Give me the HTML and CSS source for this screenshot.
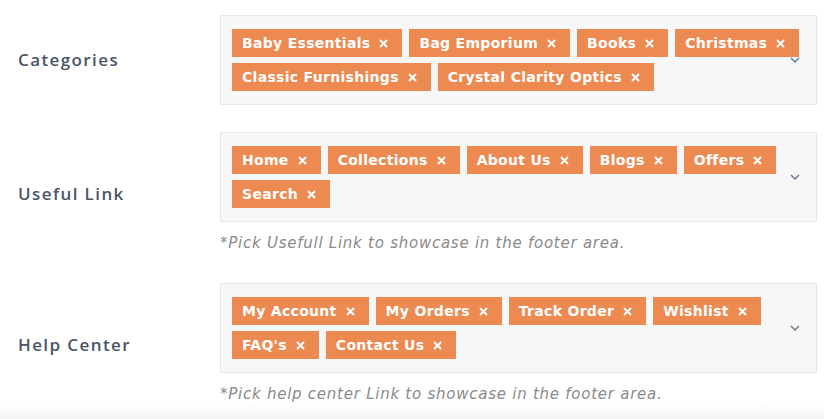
FILE: index.html
```html
<!DOCTYPE html>
<html>
<head>
<meta charset="utf-8">
<link rel="stylesheet" href="styles.css">
</head>
<body>
<div class="settings">
  <div class="field-row">
    <div class="label">Categories</div>
    <div class="field">
      <div class="select">
        <div class="tags">
          <span class="tag">Baby Essentials<svg class="x" viewBox="0 0 9 9"><path d="M1 1L8 8M8 1L1 8"/></svg></span>
          <span class="tag">Bag Emporium<svg class="x" viewBox="0 0 9 9"><path d="M1 1L8 8M8 1L1 8"/></svg></span>
          <span class="tag">Books<svg class="x" viewBox="0 0 9 9"><path d="M1 1L8 8M8 1L1 8"/></svg></span>
          <span class="tag">Christmas<svg class="x" viewBox="0 0 9 9"><path d="M1 1L8 8M8 1L1 8"/></svg></span>
          <span class="tag">Classic Furnishings<svg class="x" viewBox="0 0 9 9"><path d="M1 1L8 8M8 1L1 8"/></svg></span>
          <span class="tag">Crystal Clarity Optics<svg class="x" viewBox="0 0 9 9"><path d="M1 1L8 8M8 1L1 8"/></svg></span>
        </div>
        <svg class="chevron" viewBox="0 0 10 6"><path d="M1 1L5 5L9 1"/></svg>
      </div>
    </div>
  </div>
  <div class="field-row">
    <div class="label">Useful Link</div>
    <div class="field">
      <div class="select">
        <div class="tags">
          <span class="tag">Home<svg class="x" viewBox="0 0 9 9"><path d="M1 1L8 8M8 1L1 8"/></svg></span>
          <span class="tag">Collections<svg class="x" viewBox="0 0 9 9"><path d="M1 1L8 8M8 1L1 8"/></svg></span>
          <span class="tag">About Us<svg class="x" viewBox="0 0 9 9"><path d="M1 1L8 8M8 1L1 8"/></svg></span>
          <span class="tag">Blogs<svg class="x" viewBox="0 0 9 9"><path d="M1 1L8 8M8 1L1 8"/></svg></span>
          <span class="tag">Offers<svg class="x" viewBox="0 0 9 9"><path d="M1 1L8 8M8 1L1 8"/></svg></span>
          <span class="tag">Search<svg class="x" viewBox="0 0 9 9"><path d="M1 1L8 8M8 1L1 8"/></svg></span>
        </div>
        <svg class="chevron" viewBox="0 0 10 6"><path d="M1 1L5 5L9 1"/></svg>
      </div>
      <p class="help">*Pick Usefull Link to showcase in the footer area.</p>
    </div>
  </div>
  <div class="field-row">
    <div class="label">Help Center</div>
    <div class="field">
      <div class="select">
        <div class="tags">
          <span class="tag">My Account<svg class="x" viewBox="0 0 9 9"><path d="M1 1L8 8M8 1L1 8"/></svg></span>
          <span class="tag">My Orders<svg class="x" viewBox="0 0 9 9"><path d="M1 1L8 8M8 1L1 8"/></svg></span>
          <span class="tag">Track Order<svg class="x" viewBox="0 0 9 9"><path d="M1 1L8 8M8 1L1 8"/></svg></span>
          <span class="tag">Wishlist<svg class="x" viewBox="0 0 9 9"><path d="M1 1L8 8M8 1L1 8"/></svg></span>
          <span class="tag">FAQ's<svg class="x" viewBox="0 0 9 9"><path d="M1 1L8 8M8 1L1 8"/></svg></span>
          <span class="tag">Contact Us<svg class="x" viewBox="0 0 9 9"><path d="M1 1L8 8M8 1L1 8"/></svg></span>
        </div>
        <svg class="chevron" viewBox="0 0 10 6"><path d="M1 1L5 5L9 1"/></svg>
      </div>
      <p class="help">*Pick help center Link to showcase in the footer area.</p>
    </div>
  </div>
</div>
</body>
</html>
```
FILE: styles.css
```css
html, body {
  margin: 0;
  padding: 0;
}
body {
  width: 824px;
  height: 419px;
  overflow: hidden;
  font-family: "Open Sans", "Noto Sans", sans-serif;
  background: linear-gradient(to bottom, #ffffff 0, #ffffff 404px, #f4f4f4 419px);
}
.settings {
  display: flex;
  flex-direction: column;
  gap: 27px;
  padding-top: 15px;
}
.field-row {
  display: grid;
  grid-template-columns: 220px 597px;
  align-items: center;
}
.label {
  padding-left: 18px;
  padding-bottom: 2px;
  font-size: 17px;
  font-weight: 600;
  color: #4a5568;
  letter-spacing: 1.4px;
}
.select {
  position: relative;
  background: #f7f7f7;
  border: 1px solid #e7e7e7;
  padding: 13px 12px 13px 11px;
}
.tags {
  display: flex;
  flex-wrap: wrap;
  gap: 6px 7px;
}
.tag {
  display: inline-flex;
  align-items: center;
  height: 28px;
  padding: 0 14px 0 10px;
  background: #ec8a51;
  color: #ffffff;
  font-family: "DejaVu Sans", "Open Sans", sans-serif;
  font-size: 14px;
  font-weight: 700;
  letter-spacing: 0.3px;
  box-sizing: border-box;
  white-space: nowrap;
}
.x {
  width: 9px;
  height: 9px;
  margin-left: 9px;
  fill: none;
  stroke: #ffffff;
  stroke-width: 2;
}
.chevron {
  position: absolute;
  right: 16px;
  top: 50%;
  width: 10px;
  height: 6px;
  margin-top: -3px;
  fill: none;
  stroke: #6b7a90;
  stroke-width: 1.5;
}
.help {
  margin: 10px 0 0;
  padding-bottom: 2px;
  line-height: 22px;
  font-family: "DejaVu Sans", "Open Sans", sans-serif;
  font-size: 15px;
  font-style: italic;
  color: #8a8a8a;
  letter-spacing: 0.75px;
}
```
